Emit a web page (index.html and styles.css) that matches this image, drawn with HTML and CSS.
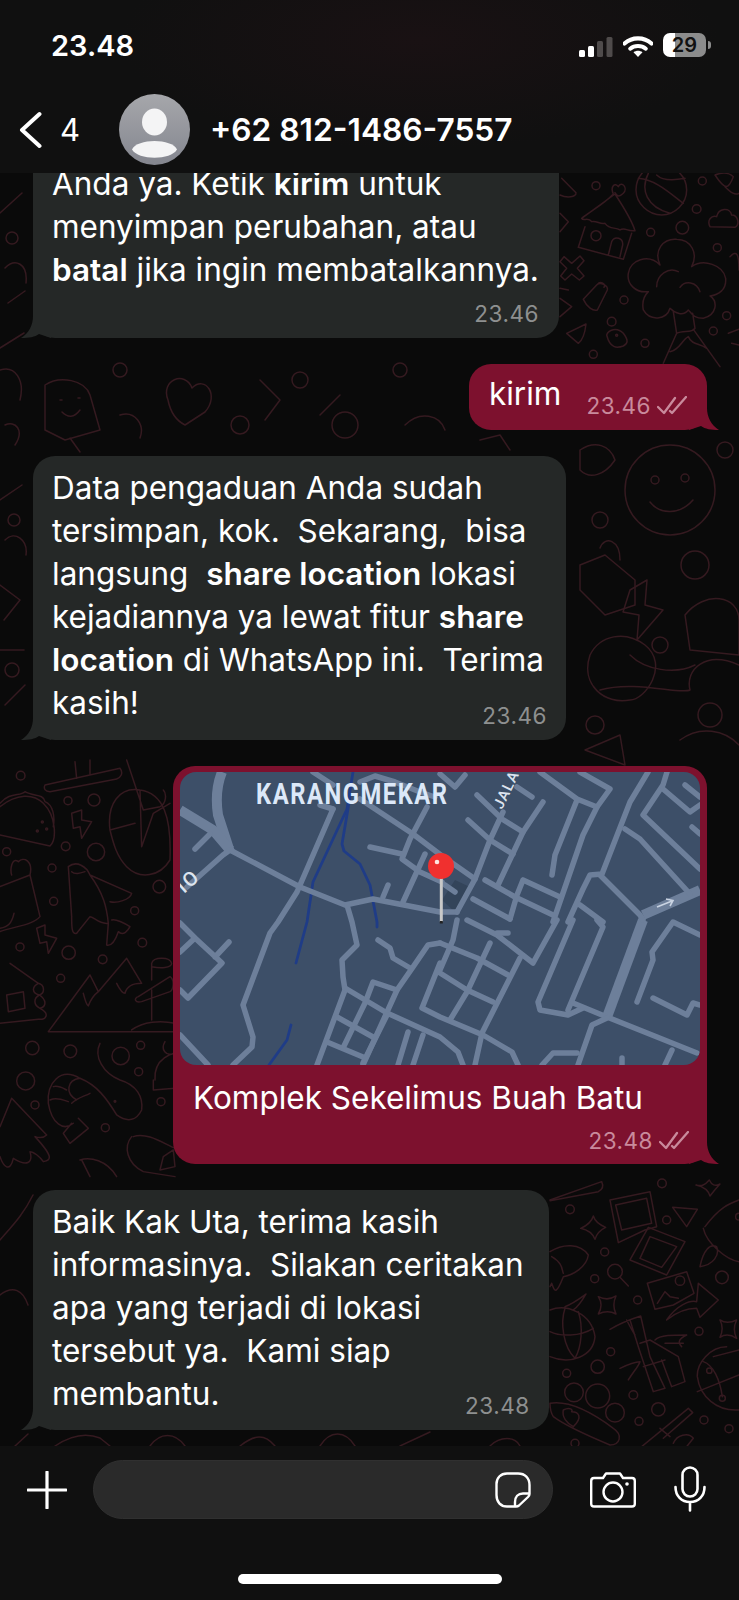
FILE: index.html
```html
<!DOCTYPE html>
<html lang="en">
<head>
<meta charset="UTF-8" />
<meta name="viewport" content="width=device-width, initial-scale=1" />
<title>WhatsApp chat</title>
<link rel="stylesheet" href="styles.css">
</head>
<body>
<div class="phone">

  <header class="topbar">
    <div class="status">
      <span class="clock">23.48</span>
      <div class="status-icons">
        <svg class="signal" width="34" height="20" viewBox="0 0 34 20">
          <rect x="0" y="13" width="6" height="7" rx="1.5" fill="#fff"/>
          <rect x="9" y="9" width="6" height="11" rx="1.5" fill="#fff"/>
          <rect x="18" y="4" width="6" height="16" rx="1.5" fill="#4f4b4b"/>
          <rect x="27.5" y="0" width="6" height="20" rx="1.5" fill="#4f4b4b"/>
        </svg>
        <svg class="wifi" width="30" height="21" viewBox="0 0 30 21">
          <path d="M1.5 7.5C9 .7 21 .7 28.500 7.500" fill="none" stroke="#fff" stroke-width="4.200" stroke-linecap="round"/>
          <path d="M7.200 12.700C11.500 9 18.500 9 22.800 12.700" fill="none" stroke="#fff" stroke-width="4" stroke-linecap="round"/>
          <path d="M10.500 16.300C13.200 14.300 16.800 14.300 19.500 16.300L15 21Z" fill="#fff"/>
        </svg>
        <div class="battery"><span>29</span></div>
        <i class="battery-nub"></i>
      </div>
    </div>
    <div class="contact">
      <svg class="back" width="24" height="38" viewBox="0 0 24 38">
        <path d="M21.500 3L4 19L21.500 35" fill="none" stroke="#fff" stroke-width="4" stroke-linecap="round" stroke-linejoin="round"/>
      </svg>
      <span class="unread">4</span>
      <svg class="avatar" width="71" height="71" viewBox="0 0 71 71">
        <defs>
          <linearGradient id="avatarFill" x1="0" y1="0" x2="0" y2="1">
            <stop offset="0" stop-color="#a6a7ab"/>
            <stop offset="1" stop-color="#84868f"/>
          </linearGradient>
        </defs>
        <circle cx="35.500" cy="35.500" r="35.500" fill="url(#avatarFill)"/>
        <ellipse cx="35.500" cy="28" rx="12.500" ry="13.500" fill="#f4f4f5"/>
        <path d="M13 55.500C18 44 53 44 58 55.500C52 66.500 19 66.500 13 55.500Z" fill="#f4f4f5"/>
      </svg>
      <span class="name">+62 812-1486-7557</span>
    </div>
  </header>

  <main class="chat">
    <svg class="doodles" viewBox="0 173 739 1273" width="739" height="1273">
      <!-- right top -->
      <g class="traced" transform="translate(560 170) scale(.3333)">
        <path d="M5 25L48 68C50 82 20 85 0 75M0 130L25 155L0 185"/>
        <circle cx="108" cy="47" r="12"/><circle cx="427" cy="33" r="12"/><circle cx="410" cy="117" r="13"/>
        <circle cx="272" cy="187" r="12"/><circle cx="367" cy="173" r="19"/><circle cx="472" cy="233" r="12"/>
        <circle cx="192" cy="390" r="12"/><circle cx="100" cy="553" r="12"/><circle cx="255" cy="520" r="12"/>
        <circle cx="500" cy="437" r="12"/><circle cx="460" cy="483" r="12"/>
        <path d="M305 135C345 135 380 100 380 60S350 -10 305 -15S228 20 228 60S265 135 305 135ZM235 25C290 30 330 70 370 100M265 10C240 60 260 110 330 130M290 15C310 35 350 30 375 25"/>
        <path d="M65 145C90 125 135 100 160 72C150 50 165 35 175 50C185 30 205 55 190 70C175 85 170 75 165 68M165 72C190 110 215 150 225 182C200 185 195 170 180 180C165 170 150 180 135 160C120 165 110 150 95 155C85 140 70 155 65 145ZM75 170L55 232L190 268L215 190M145 255L155 215C165 195 190 205 188 225L180 260"/>
        <circle cx="108" cy="197" r="15"/>
        <path d="M300 285C280 240 310 205 350 208C395 210 415 250 395 290C430 265 490 285 497 325C500 360 475 375 450 378C475 395 470 435 430 445C400 445 395 430 385 420C370 440 345 430 330 415C320 450 270 455 250 420C245 395 255 375 265 365C225 370 200 340 205 310C210 270 265 250 300 285ZM290 350C290 315 325 290 355 305M360 352C375 330 410 335 420 365M340 425L350 490C370 480 395 490 405 475L398 430M350 490L310 580M400 478L480 590M330 545C360 540 365 510 385 500C395 525 420 520 440 535"/>
        <path d="M12 260L35 280L60 258L72 272L52 295L72 318L58 330L35 312L15 330L2 318L20 295L0 275Z"/>
        <path d="M70 388L110 345C120 335 145 345 142 360L112 420C100 425 80 410 70 388ZM110 345L118 338C128 335 138 345 132 352"/>
        <path d="M20 490L78 462C75 490 68 510 55 520ZM140 495C145 480 170 470 190 490C205 510 205 520 190 528C170 535 150 535 140 495Z"/>
        <circle cx="155" cy="455" r="13"/><circle cx="170" cy="496" r="3"/>
        <path d="M450 170C440 150 455 135 470 140C475 115 510 110 515 135C535 135 540 165 525 172Z"/>
        <path d="M465 15C490 5 510 10 520 20C505 60 495 60 465 15ZM495 50C515 70 525 75 537 70M510 260C530 240 537 250 537 300M505 490L537 478M515 520L537 525M0 355L25 360M0 385L35 410L0 440"/>
      </g>
      <!-- left column -->
      <g class="traced" transform="translate(0 760) scale(.3333)">
        <circle cx="62" cy="47" r="13"/><circle cx="204" cy="122" r="12"/><circle cx="282" cy="120" r="18"/>
        <circle cx="197" cy="259" r="13"/><circle cx="288" cy="276" r="26"/><circle cx="156" cy="324" r="12"/>
        <circle cx="161" cy="424" r="12"/><circle cx="60" cy="561" r="12"/><circle cx="206" cy="578" r="20"/>
        <circle cx="308" cy="598" r="13"/><circle cx="182" cy="655" r="12"/><circle cx="404" cy="452" r="12"/>
        <circle cx="427" cy="548" r="13"/><circle cx="478" cy="380" r="19"/><circle cx="97" cy="864" r="20"/>
        <circle cx="211" cy="874" r="19"/><circle cx="77" cy="963" r="27"/><circle cx="105" cy="1035" r="12"/>
        <circle cx="362" cy="888" r="26"/><circle cx="422" cy="856" r="12"/><circle cx="416" cy="935" r="12"/>
        <circle cx="316" cy="1103" r="12"/><circle cx="483" cy="1025" r="12"/><circle cx="20" cy="275" r="12"/>
        <path d="M0 225L150 258C170 240 170 170 130 130C100 100 50 100 0 140M0 130C30 95 60 110 75 95C100 110 130 100 135 125C160 135 165 170 160 200"/>
        <circle cx="127" cy="186" r="3"/><circle cx="112" cy="213" r="3"/><circle cx="140" cy="207" r="3"/>
        <path d="M215 160L245 150L245 180L275 185L245 235L240 200L220 205ZM110 505L135 495L135 525L170 535L145 580L140 545L120 550Z"/>
        <path d="M135 75L360 25C372 40 360 55 350 57L150 95C135 95 130 85 135 75ZM230 55L225 5M270 45L270 0"/>
        <path d="M0 380L90 345L120 470C100 495 40 500 0 515M90 345C100 300 70 290 55 305C35 290 30 330 35 345M0 505C25 500 35 490 42 460"/>
        <path d="M205 320C230 300 260 320 270 345C310 400 320 440 325 490C300 495 280 470 270 470L230 520C215 525 215 500 215 470ZM215 335C225 345 240 340 255 335M270 345L395 400C390 420 350 430 330 425M325 490L320 555C340 560 350 530 355 515C370 530 385 510 390 500C375 490 345 475 335 480"/>
        <path d="M330 210C320 130 360 80 420 90C490 100 515 170 510 300C480 350 420 360 380 320C350 290 340 250 330 210ZM330 210L405 190M420 90L425 260L460 160L510 130M380 0L430 150L480 140C500 130 500 100 490 90"/>
        <path d="M145 815L270 645L295 695L380 595L425 670M250 700C255 720 260 735 265 738C270 725 275 710 295 695M350 670C360 690 370 700 375 700C380 680 395 670 425 670M145 815H520M395 810C430 785 480 780 525 790"/>
        <path d="M415 710L510 650C525 660 520 690 510 695L425 725C405 730 400 715 415 710ZM455 660V610C460 590 510 590 515 610C515 625 480 625 455 620M455 690V780"/>
        <path d="M30 610L115 670C135 675 135 700 118 705C140 720 140 740 120 745C150 760 140 780 115 778L0 790M20 705L70 695L75 745L25 755ZM115 670C95 680 95 700 118 705M118 705C100 715 100 735 120 745"/>
        <path d="M300 850C280 890 310 940 360 960C410 975 430 1010 425 1050C410 1080 385 1090 350 1065C320 1015 290 975 240 955C180 920 140 970 145 1030C155 1090 190 1115 220 1090M240 955C200 960 195 1000 230 1020M160 980C175 975 190 985 200 990M150 1020C170 1010 190 1020 205 1025M215 1030C230 1015 250 1010 270 1000M215 1090L190 1120L210 1150L265 1105L235 1075"/>
        <circle cx="345" cy="1024" r="2.500"/>
        <path d="M35 1015L140 1125C130 1135 120 1135 105 1130C160 1190 155 1200 130 1205C120 1190 100 1175 90 1175C100 1210 80 1220 40 1195C30 1240 10 1220 0 1190M0 1100L35 1015"/>
        <path d="M465 960C460 890 525 880 525 880M460 960V990L525 985M495 845C480 870 500 890 520 880"/>
        <path d="M400 1130C440 1115 490 1150 525 1165M395 1130C370 1160 380 1210 430 1235L525 1250M490 1190L520 1170L525 1220L480 1230ZM240 1200C270 1190 320 1200 350 1250M245 1200L270 1250"/>
      </g>
      <!-- right bottom -->
      <g class="traced" transform="translate(550 1180) scale(.3333)">
        <circle cx="60" cy="88" r="13"/><circle cx="350" cy="120" r="12"/><circle cx="164" cy="216" r="12"/>
        <circle cx="134" cy="296" r="12"/><circle cx="263" cy="360" r="12"/><circle cx="447" cy="454" r="12"/>
        <circle cx="182" cy="515" r="12"/><circle cx="143" cy="560" r="20"/><circle cx="50" cy="580" r="12"/>
        <circle cx="250" cy="645" r="13"/><circle cx="267" cy="724" r="12"/><circle cx="325" cy="688" r="20"/>
        <circle cx="462" cy="720" r="12"/><circle cx="537" cy="746" r="12"/><circle cx="516" cy="292" r="19"/>
        <circle cx="336" cy="10" r="13"/><circle cx="75" cy="790" r="12"/>
        <path d="M0 60L155 5C162 20 155 30 145 35L0 62"/>
        <path d="M92 145C115 135 125 125 130 108C135 125 150 135 167 142C150 150 140 160 135 178C128 160 115 150 92 145ZM145 350C165 360 180 360 198 348C190 365 190 385 198 402C180 392 165 392 145 402C155 385 155 365 145 350ZM438 15C455 20 465 15 478 0C485 15 495 20 510 12C498 25 490 35 480 48C475 30 460 20 438 15ZM510 420C525 430 540 430 560 420C550 440 550 455 560 475C540 462 525 462 510 472C518 455 518 435 510 420Z"/>
        <path d="M180 60L300 35L320 140L285 150L205 188ZM197 75L290 55L305 130L215 150Z"/>
        <path d="M295 142L405 185L350 285L240 240ZM300 170L380 200L335 262L270 235Z"/>
        <path d="M292 310L410 275L432 340L370 375L315 388Z"/><circle cx="390" cy="302" r="14"/>
        <path d="M322 370L345 335L360 350L385 355"/>
        <path d="M350 420C380 375 420 360 440 365L445 310L505 360L450 412L440 385C410 385 375 400 350 420Z"/>
        <path d="M368 82L442 88L410 140ZM0 215C40 190 90 190 115 225C110 260 70 285 40 290C20 340 15 340 5 310L0 320M5 230C40 250 35 270 40 280"/>
        <circle cx="195" cy="275" r="22"/><path d="M210 292L235 318"/>
        <path d="M0 390C50 370 125 400 135 470C130 530 60 555 0 530M45 380C70 370 90 355 108 342C95 365 85 380 70 390M45 385C30 430 40 500 75 535M85 395C100 440 95 500 75 535M0 455C30 470 90 470 130 445"/>
        <path d="M180 448C210 430 235 420 272 408L300 530L345 625L310 635L265 500L240 420M230 420C240 440 245 450 255 465M270 490L300 480L385 530L405 605L365 620L335 540M315 480C330 465 370 465 410 465C390 475 380 485 395 500M345 490L400 490M210 565C240 550 260 545 270 545C265 560 250 575 235 600M280 560L345 540"/>
        <path d="M465 140C510 80 540 70 567 60M460 145C470 190 530 240 567 245M450 260C460 210 480 190 500 200C510 225 490 255 450 260Z"/>
        <circle cx="567" cy="110" r="10"/>
        <path d="M530 500C480 500 440 550 442 590C450 650 500 695 567 690M460 545C490 555 510 600 517 650M442 635L567 585M490 530L567 510"/>
        <circle cx="478" cy="572" r="8"/><circle cx="517" cy="655" r="9"/>
        <circle cx="72" cy="637" r="28"/><circle cx="143" cy="648" r="36"/><circle cx="195" cy="698" r="28"/>
        <path d="M0 670C60 660 130 700 190 745C220 765 210 795 180 795C120 770 50 740 10 710C0 695 0 680 0 670ZM40 690C60 680 70 690 65 695C85 695 100 710 70 740C50 730 35 710 40 690Z"/>
        <path d="M275 800L415 685L428 698L340 775M330 745L360 770M370 790C380 765 415 755 430 775L410 800"/>
      </g>
      <!-- shapes in the gaps between the bubbles -->
      <g transform="translate(0 340)">
        <path d="M45 45C60 35 85 40 90 55L100 90L65 100L45 90ZM60 60H62M78 58H80M62 72C68 78 74 78 80 70M70 98L80 112"/>
        <path d="M168 60C160 40 185 30 192 48C205 35 220 55 205 72L185 85C175 80 170 70 168 60Z"/>
        <circle cx="120" cy="30" r="7"/><circle cx="240" cy="85" r="9"/><circle cx="300" cy="40" r="8"/><circle cx="345" cy="85" r="13"/><circle cx="400" cy="30" r="7"/>
        <path d="M260 40L280 60L265 80M320 75L340 55M405 85C420 70 440 75 445 90"/>
        <path d="M0 30C15 25 25 40 20 60M5 85C15 80 25 90 15 105"/>
        <path d="M480 100L500 95L510 110M120 75C135 70 145 85 140 98"/>
      </g>
      <g transform="translate(575 440)">
        <circle cx="95" cy="50" r="45"/><circle cx="80" cy="40" r="4"/><circle cx="110" cy="38" r="4"/><path d="M75 62C85 75 105 75 118 60"/>
        <path d="M5 10C20 0 35 5 40 20C30 35 15 40 5 30Z"/><circle cx="25" cy="80" r="8"/><circle cx="150" cy="10" r="8"/>
        <path d="M30 115L60 140V165L30 175L5 150V125ZM25 108C30 95 45 100 45 120"/>
        <circle cx="120" cy="125" r="14"/><circle cx="85" cy="205" r="8"/>
        <path d="M55 150L72 140L70 165L88 170L62 200L64 175L48 172Z"/>
        <path d="M110 175C130 150 164 155 164 180L164 215L115 210ZM120 225C100 235 70 230 55 215"/>
        <path d="M15 215C25 195 50 190 70 205C95 225 70 260 55 260C30 265 5 245 15 215ZM25 250C60 240 105 255 115 250C110 230 130 210 164 225"/>
        <circle cx="20" cy="285" r="9"/><circle cx="135" cy="275" r="12"/>
        <path d="M10 310L45 295L50 325ZM105 300C125 285 150 290 164 305"/>
      </g>
      <!-- between the bubbles, left and top -->
      <g transform="translate(0 173)">
        <path d="M0 40L22 20M5 95C15 85 28 90 26 110M8 130L25 118M0 175L24 160"/>
        <circle cx="12" cy="65" r="6"/>
      </g>
      <g transform="translate(0 470)">
        <path d="M0 30L22 15M5 70C15 60 28 70 26 85M0 115L20 130L4 150M0 180H24M5 235L25 215"/>
        <circle cx="14" cy="50" r="6"/><circle cx="12" cy="200" r="7"/>
      </g>
      <g transform="translate(33 1165)">
        <path d="M0 30C-10 50 -20 60 -33 75M-33 130C-20 120 -10 125 -5 140"/>
      </g>
      <g transform="translate(0 1430)">
        <path d="M15 16L28 4M55 16C70 6 85 2 100 8L110 16M150 16C160 2 175 2 185 16M240 16C255 4 265 4 275 16M320 16C330 0 345 0 355 16M400 16L430 2M490 16C500 6 515 6 520 16"/>
      </g>
    </svg>

    <div class="msg in">
      Anda ya. Ketik <b>kirim</b> untuk<br>
      menyimpan perubahan, atau<br>
      <b>batal</b> jika ingin membatalkannya.
      <div class="meta"><span class="time">23.46</span></div>
    </div>

    <div class="msg out short">
      <span>kirim</span>
      <div class="meta">
        <span class="time">23.46</span>
        <svg class="ticks" width="30" height="20" viewBox="0 0 30 20"><path d="M1 11L7 17L18 2M13 15L15 17L29 1" fill="none" stroke="#c98a9c" stroke-width="2.300" stroke-linecap="round" stroke-linejoin="round"/></svg>
      </div>
    </div>

    <div class="msg in tall">
      Data pengaduan Anda sudah<br>
      tersimpan, kok.&nbsp; Sekarang,&nbsp; bisa<br>
      langsung&nbsp; <b>share location</b> lokasi<br>
      kejadiannya ya lewat fitur <b>share</b><br>
      <b>location</b> di WhatsApp ini.&nbsp; Terima<br>
      kasih!
      <div class="meta"><span class="time">23.46</span></div>
    </div>

    <div class="msg out location">
      <div class="map">
        <svg viewBox="0 0 520 293" width="520" height="293">
          <rect width="520" height="293" fill="#3d4f68"/>
          <path class="shade" d="M262 128L275 108L292 116L275 140Z"/>
          <g class="water">
            <path d="M173 0L167 37L133 110L127 150L116 191"/>
            <path d="M170 25L162 72L164 79L180 92L190 113L197 150L197 155"/>
            <path d="M111 253L107 268L89 293"/>
          </g>
          <g class="wide">
            <path d="M42 0C36 15 36 30 38 43L50 80"/>
            <path d="M0 38L33 58L50 78"/>
            <path d="M463 148L427 245"/>
            <path d="M520 118L463 143"/>
          </g>
          <g class="road">
            <path d="M15 77L30 62"/>
            <path d="M7 115L43 83L50 78L120 115L165 133L193 127L260 140L277 140"/>
            <path d="M153 37L117 120L98 150L90 161L63 233L73 265L72 275L53 293"/>
            <path d="M133 0L153 13M140 33L153 37"/>
            <path d="M180 27L233 62L262 84L275 93L295 107"/>
            <path d="M180 10L195 4L215 10L240 20L255 25M260 2L275 15L285 3"/>
            <path d="M190 75L222 82"/>
            <path d="M247 35L230 67L222 87L240 100L262 110"/>
            <path d="M245 82L223 130"/>
            <path d="M208 113L203 125"/>
            <path d="M167 133L172 150L177 173L162 188L163 205L165 218L137 293"/>
            <path d="M0 151L15 166L42 191L8 226L0 218M49 170L35 185M0 180L15 166M0 263L28 293"/>
            <path d="M198 168L210 176L213 186L230 196"/>
            <path d="M260 171L248 173L233 195L217 218L183 293"/>
            <path d="M165 216L207 241L260 265L278 280L283 293"/>
            <path d="M242 236L260 191M242 236L260 245L303 263L332 280L338 293"/>
            <path d="M157 245L193 265M147 270L183 285"/>
            <path d="M185 231L163 276M185 231L193 210L217 218"/>
            <path d="M207 243L183 291"/>
            <path d="M228 260L218 293M243 263L233 293"/>
            <path d="M260 171L297 186L328 203"/>
            <path d="M277 148L273 168L260 198"/>
            <path d="M310 171L287 220L270 248"/>
            <path d="M340 186L302 261L295 293"/>
            <path d="M260 201L287 218L313 230"/>
            <path d="M287 148L317 163L353 191L377 148"/>
            <path d="M317 161L328 161"/>
            <path d="M393 148L358 230L360 238L388 243L403 236"/>
            <path d="M417 148L423 155L388 238"/>
            <path d="M393 231L427 245L517 281"/>
            <path d="M427 246L412 253L398 293"/>
            <path d="M362 293L373 281L397 281"/>
            <path d="M442 286L442 293M492 278L485 293"/>
            <path d="M457 230L473 188L472 180L493 150L520 163"/>
            <path d="M473 226L507 243L513 231L520 233"/>
            <path d="M360 0L397 27L417 35"/>
            <path d="M400 0L430 17L417 35L403 63L373 150"/>
            <path d="M397 28L375 83L372 103"/>
            <path d="M468 0L450 30L422 102L410 103L403 117L388 150"/>
            <path d="M487 0L483 13L463 43L520 97"/>
            <path d="M483 17L510 40L520 33M505 13L520 25M512 55L520 62"/>
            <path d="M445 57L460 67L510 122"/>
            <path d="M420 103L460 143L463 148"/>
            <path d="M400 133L423 150"/>
            <path d="M297 23L322 47L343 60M288 48L310 68L333 82"/>
            <path d="M363 30L343 60L318 113M323 40L310 68L295 107L277 140"/>
            <path d="M337 15L352 25"/>
            <path d="M305 108L335 125L373 143"/>
            <path d="M343 108L380 125M343 108L337 123L330 147"/>
            <path d="M293 127L330 147"/>
            <path d="M265 113L275 120"/>
          </g>
          <text class="area" transform="translate(76 32) scale(.82 1)" textLength="233" lengthAdjust="spacing">KARANGMEKAR</text>
          <text class="street" transform="translate(322 38) rotate(-64)">JALA</text>
          <text class="street label-io" transform="translate(4 122) rotate(-42)">IO</text>
          <path class="oneway" d="M477 135L492 129M486 127L493 128.500L490 134"/>
          <rect x="259.800" y="100" width="3" height="50" fill="#c9c9c9"/>
          <rect x="259.800" y="149" width="3" height="2.500" fill="#222"/>
          <circle cx="261" cy="94" r="13" fill="#f0302f"/>
          <circle cx="257" cy="90" r="2.300" fill="#ffe6e0"/>
        </svg>
      </div>
      <div class="place">Komplek Sekelimus Buah Batu</div>
      <div class="meta">
        <span class="time">23.48</span>
        <svg class="ticks" width="30" height="20" viewBox="0 0 30 20"><path d="M1 11L7 17L18 2M13 15L15 17L29 1" fill="none" stroke="#c98a9c" stroke-width="2.300" stroke-linecap="round" stroke-linejoin="round"/></svg>
      </div>
    </div>

    <div class="msg in roomy">
      Baik Kak Uta, terima kasih<br>
      informasinya.&nbsp; Silakan ceritakan<br>
      apa yang terjadi di lokasi<br>
      tersebut ya.&nbsp; Kami siap<br>
      membantu.
      <div class="meta"><span class="time">23.48</span></div>
    </div>
  </main>

  <footer class="composer">
    <div class="composer-row">
      <svg class="plus" width="40" height="38" viewBox="0 0 40 38"><path d="M20 1V37M1 19H39" stroke="#fff" stroke-width="3.200" stroke-linecap="round"/></svg>
      <div class="input">
        <svg width="36" height="36" viewBox="0 0 36 36" fill="none" stroke="#fff" stroke-width="2.400" stroke-linejoin="round">
          <path d="M12 1.500H23C30 1.500 34.500 6 34.500 13V22C34.500 23 34 24 33 25L24 33.500C23 34.300 22 34.500 21 34.500H12C5.500 34.500 1.500 30 1.500 23V12C1.500 6 5.500 1.500 12 1.500Z"/>
          <path d="M34 21.500H28C23 21.500 20 25 20 30V34.500"/>
        </svg>
      </div>
      <svg class="camera" width="46" height="36" viewBox="0 0 46 36" fill="none" stroke="#fff" stroke-width="2.400" stroke-linejoin="round">
        <path d="M4 6H13L16 1.500H30L33 6H42C43.500 6 44.800 7 44.800 9V32C44.800 33.500 43.500 34.500 42 34.500H4C2.500 34.500 1.200 33.500 1.200 32V9C1.200 7 2.500 6 4 6Z"/>
        <circle cx="23" cy="20" r="9.500"/>
        <circle cx="37" cy="12" r="1.800" fill="#fff" stroke="none"/>
      </svg>
      <svg class="mic" width="32" height="46" viewBox="0 0 32 46" fill="none" stroke="#fff" stroke-width="2.600" stroke-linecap="round">
        <rect x="8.500" y="1.500" width="15" height="29" rx="7.500"/>
        <path d="M1.500 21C1.500 30 7.500 36 16 36S30.500 30 30.500 21M16 36V44.500"/>
      </svg>
    </div>
    <div class="home-bar"></div>
  </footer>

</div>
</body>
</html>
```

FILE: styles.css
```css
* { box-sizing: border-box; }
body { margin: 0; background: #0a0a0a; font-family: Inter, "Noto Sans", sans-serif; color: #fff; }
.phone { width: 739px; height: 1600px; display: flex; flex-direction: column; overflow: hidden; }

.topbar { height: 173px; flex: none; position: relative; z-index: 2; padding-top: 28px; background: radial-gradient(ellipse 300px 110px at 420px 40px, #191113, #101010); }
.status { display: flex; justify-content: space-between; align-items: center; height: 34px; padding: 0 28px 0 51px; }
.clock { font-size: 29px; font-weight: 600; }
.status-icons { display: flex; align-items: center; }
.signal { margin-right: 10px; margin-top: 3px; }
.wifi { margin-right: 10px; margin-top: 3px; }
.battery { width: 43px; height: 24px; border-radius: 7px; background: linear-gradient(90deg, #fff 29%, #8c8c8c 29%); color: #111; font-size: 20px; font-weight: 600; text-align: center; line-height: 24px; }
.battery-nub { width: 3px; height: 8px; margin-left: 2px; background: #8c8c8c; border-radius: 0 3px 3px 0; }

.contact { display: flex; align-items: center; padding-left: 18px; margin-top: 32px; }
.back { margin-right: 18px; }
.unread { font-size: 31px; width: 59px; }
.avatar { margin-right: 20px; }
.name { font-size: 31.700px; font-weight: 600; }

.chat { flex: 1; min-height: 0; position: relative; overflow: hidden; display: flex; flex-direction: column; justify-content: flex-end; gap: 26px; padding: 0 32px 16px 33px; background: #0a0a0a; }
.doodles { position: absolute; left: 0; top: 0; fill: none; stroke: #351a20; stroke-width: 1.500; stroke-linecap: round; stroke-linejoin: round; }
.traced { stroke-width: 4.500; }

.msg { position: relative; flex: none; width: fit-content; border-radius: 22px; padding: 10px 20px 15px 19px; font-size: 31.500px; line-height: 43px; }
.msg b { font-weight: 600; }
.msg::after { content: ""; position: absolute; bottom: 0; width: 30px; height: 22px; background: inherit; }
.in { background: #252827; }
.in::after { left: -12px; clip-path: path("M12 0C12 9 8 17 0 22C8 22 14 21 18 18L30 22L30 0Z"); }
.out { background: #7d112e; align-self: flex-end; }
.out::after { right: -12px; clip-path: path("M18 0C18 9 22 17 30 22C22 22 16 21 12 18L0 22L0 0Z"); }

.meta { display: flex; justify-content: flex-end; align-items: center; gap: 6px; height: 32px; margin: 7px 0 -7px; position: relative; z-index: 1; }
.time { font-size: 22.500px; letter-spacing: 0.5px; color: #8e9090; line-height: 32px; }
.out .time { color: #c98a9c; }

/* last line of text shares its row with the time */
.tall { padding: 10px 22px 16px 19px; }
.tall .meta { margin: -24px -3px -8px 0; }
.roomy { padding-right: 25px; }
.roomy .meta { margin: -25px -6px -7px 0; }

.short { display: flex; height: 66px; padding: 8px 20px 0 20px; }
.short .meta { margin: 22px 0 0 25px; height: 24px; }

.location { padding: 6px 7px 7px; width: 534px; }
.map { height: 293px; border-radius: 16px; overflow: hidden; }
.map svg { display: block; }
.place { padding-left: 13px; margin-top: 11px; }
.location .meta { margin: 6px 11px 0 0; }

.shade { fill: #33445a; }
.water path { fill: none; stroke: #1f3c87; stroke-width: 2.800; stroke-linecap: round; stroke-linejoin: round; }
.wide path { fill: none; stroke: #6d7f9a; stroke-width: 10; stroke-linejoin: round; }
.road path { fill: none; stroke: #6d7f9a; stroke-width: 5.500; stroke-linecap: round; stroke-linejoin: round; }
.area { font-family: Roboto, sans-serif; font-weight: 700; font-size: 29px; fill: #dce8f8; }
.street { font-family: Roboto, sans-serif; font-size: 15px; font-weight: 500; letter-spacing: 1px; fill: #dce4ef; }
.label-io { font-size: 20px; letter-spacing: 2px; }
.oneway { fill: none; stroke: #c9d3e2; stroke-width: 1.600; }

.composer { height: 154px; flex: none; background: #101010; padding-top: 14px; position: relative; z-index: 2; }
.composer-row { display: flex; align-items: center; height: 59px; padding-left: 27px; }
.plus { flex: none; }
.input { width: 460px; height: 59px; margin-left: 26px; border-radius: 30px; background: #2a2a2a; border: 1px solid #303030; display: flex; align-items: center; justify-content: flex-end; padding-right: 21px; }
.camera { margin-left: 37px; }
.mic { margin-left: 38px; margin-top: -2px; }
.home-bar { width: 264px; height: 10px; margin: 55px 0 0 238px; border-radius: 5px; background: #fff; }
```
